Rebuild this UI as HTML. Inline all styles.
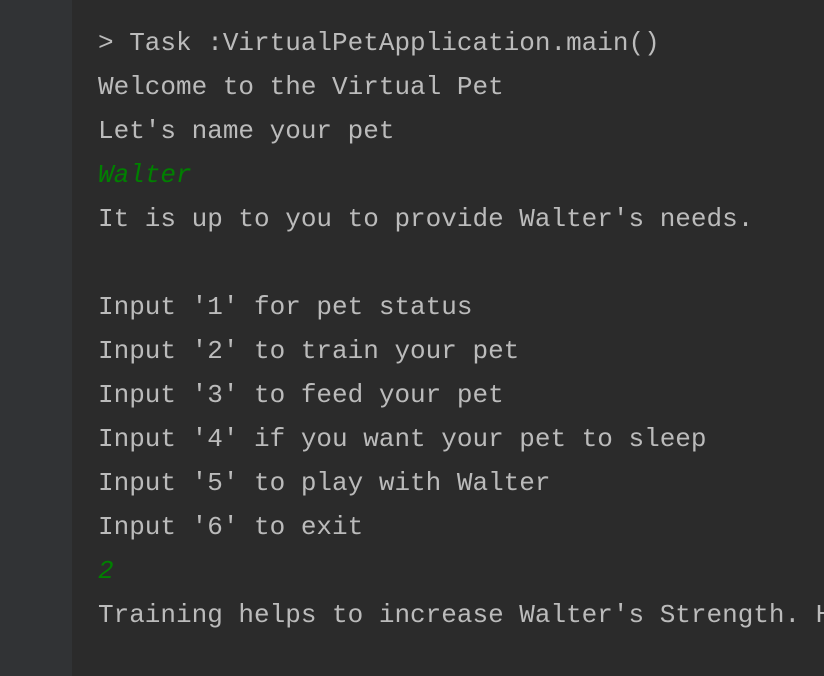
<!DOCTYPE html>
<html><head><style>
html,body{margin:0;padding:0;width:824px;height:676px;overflow:hidden;background:#2b2b2b;}
.g{position:absolute;left:0;top:0;width:72px;height:676px;background:#313335;}
.t{position:absolute;left:98px;top:21px;font-family:"Liberation Mono",monospace;font-size:26px;line-height:44px;color:#bbbbbb;white-space:pre;}
.gr{color:#008000;font-style:italic;}
</style></head><body>
<div class="g"></div>
<div class="t">&gt; Task :VirtualPetApplication.main()
Welcome to the Virtual Pet
Let's name your pet
<span class="gr">Walter</span>
It is up to you to provide Walter's needs.

Input '1' for pet status
Input '2' to train your pet
Input '3' to feed your pet
Input '4' if you want your pet to sleep
Input '5' to play with Walter
Input '6' to exit
<span class="gr">2</span>
Training helps to increase Walter's Strength. H</div>
</body></html>
